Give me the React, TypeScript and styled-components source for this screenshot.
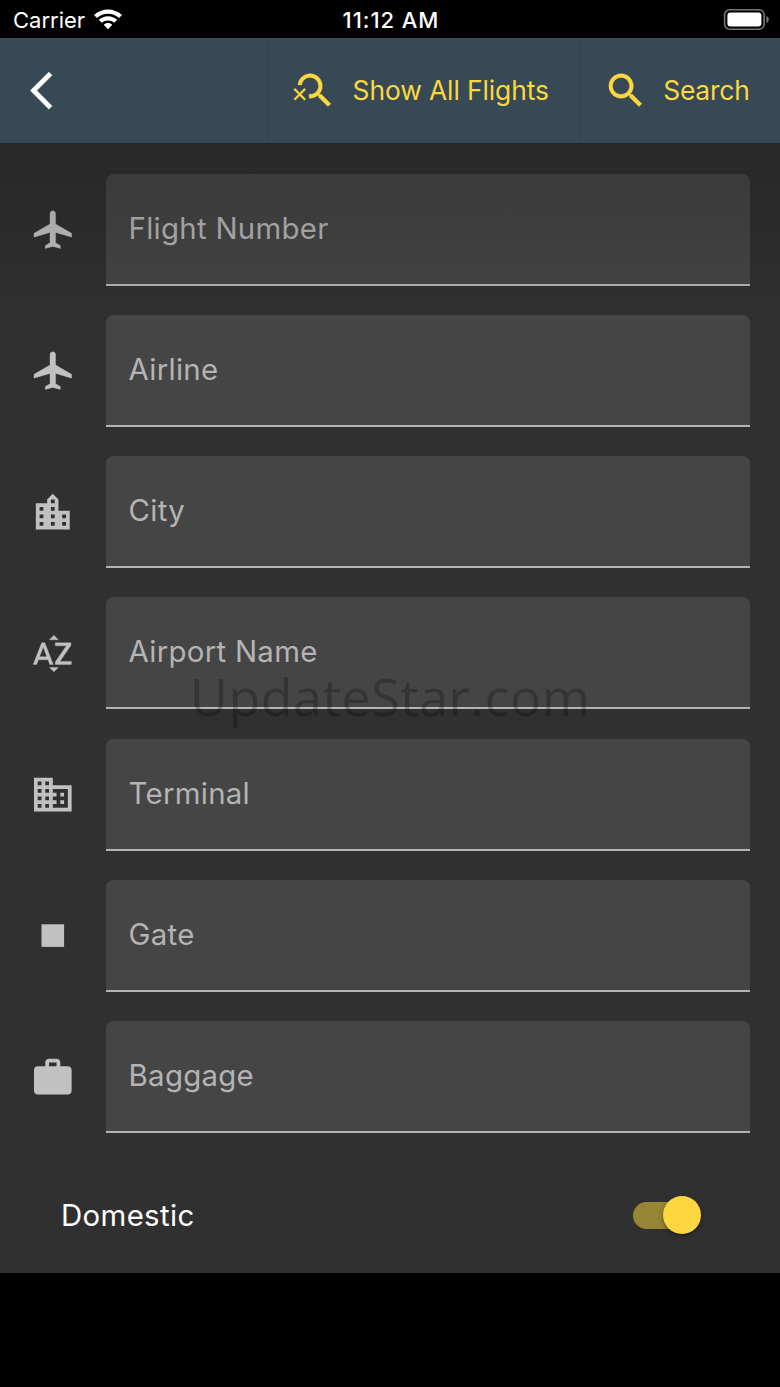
import React from "react";
import styled, { createGlobalStyle } from "styled-components";

const Global = createGlobalStyle`
  * { box-sizing: border-box; }
  body { margin: 0; background: #000; }
`;

const Screen = styled.div`
  position: relative;
  width: 780px;
  height: 1387px;
  overflow: hidden;
  display: flex;
  flex-direction: column;
  background: #000;
  color: #fff;
  font-family: Inter, "Liberation Sans", sans-serif;
`;

const StatusBar = styled.header`
  height: 38px;
  flex: none;
  display: grid;
  grid-template-columns: 1fr auto 1fr;
  align-items: center;
  padding: 1px 11px 0 13px;
  font-size: 22px;
  line-height: 36px;
`;

const Carrier = styled.div`
  display: flex;
  align-items: center;
  gap: 8px;
`;

const Clock = styled.div`
  font-weight: 500;
  font-size: 22px;
  letter-spacing: 0.95px;
`;

const BatterySlot = styled.div`
  display: flex;
  justify-content: flex-end;
`;

const AppBar = styled.nav`
  height: 105px;
  flex: none;
  display: flex;
  background: #364954;
  color: #fdd73f;
  font-size: 26.4px;
`;

const BackButton = styled.div`
  width: 268px;
  display: flex;
  align-items: center;
  padding-left: 30px;
  color: #fff;
`;

const BarAction = styled.div<{ $width: number; $space: number }>`
  width: ${(p) => p.$width}px;
  display: flex;
  align-items: center;
  padding-left: 23px;
  border-left: 1px solid #32444c;
  letter-spacing: ${(p) => p.$space}px;
  white-space: nowrap;
`;

const ActionLabel = styled.span`
  margin-left: 15px;
  padding-bottom: 2px;
`;

const Form = styled.main`
  position: relative;
  height: 1130px;
  flex: none;
  display: flex;
  flex-direction: column;
  gap: 29.3px;
  padding: 30.5px 30px 0;
  background: #303030;
`;

const BarShade = styled.div`
  position: absolute;
  inset: 0 0 auto 0;
  height: 180px;
  background: linear-gradient(rgba(0, 0, 0, 0.16), rgba(0, 0, 0, 0.12) 40%, rgba(0, 0, 0, 0));
`;

const FieldRow = styled.div`
  height: 112px;
  flex: none;
  display: flex;
  align-items: center;
  gap: 30px;
  color: #c1c1c1;
`;

const Field = styled.div`
  flex: 1;
  height: 112px;
  padding: 0 23px;
  border-radius: 7.5px 7.5px 0 0;
  border-bottom: 2px solid #b4b4b4;
  background: #454545;
  color: #b4b4b4;
  font-size: 29.4px;
  line-height: 110.4px;
  letter-spacing: 0.28px;
`;

const SwitchRow = styled.div`
  display: flex;
  align-items: center;
  justify-content: space-between;
  margin-top: 33.8px;
  height: 38px;
  padding: 0 49px 0 31px;
  font-size: 29.4px;
  letter-spacing: 0.35px;
`;

const Track = styled.div`
  width: 68px;
  height: 38px;
  display: flex;
  align-items: center;
  justify-content: flex-end;
  position: relative;
  &::before {
    content: "";
    position: absolute;
    left: 0;
    top: 6px;
    width: 62px;
    height: 26.5px;
    border-radius: 14px;
    background: #978536;
  }
`;

const Thumb = styled.div`
  position: relative;
  width: 38px;
  height: 38px;
  border-radius: 50%;
  background: #fed640;
  box-shadow: 0 2px 4px rgba(0, 0, 0, 0.4);
`;

const Watermark = styled.div`
  position: absolute;
  left: 190px;
  top: 662px;
  font-family: "Open Sans", "Noto Sans", sans-serif;
  font-size: 52px;
  line-height: 68px;
  letter-spacing: 0.5px;
  color: rgba(0, 0, 0, 0.24);
  white-space: nowrap;
`;

const paths = {
  back: "M11.67 3.87L9.9 2.1 0 12l9.9 9.9 1.77-1.77L3.54 12z",
  search:
    "M15.5 14h-.79l-.28-.27C15.41 12.59 16 11.11 16 9.5 16 5.91 13.09 3 9.5 3S3 5.91 3 9.5 5.91 16 9.5 16c1.61 0 3.09-.59 4.23-1.57l.27.28v.79l5 4.99L20.49 19l-4.99-5zm-6 0C7.01 14 5 11.99 5 9.5S7.01 5 9.5 5 14 7.01 14 9.5 11.99 14 9.5 14z",
  searchOff:
    "M15.5 14h-.79l-.28-.27C15.41 12.59 16 11.11 16 9.5 16 5.91 13.09 3 9.5 3 6.08 3 3.28 5.64 3.03 9h2.02C5.3 6.75 7.18 5 9.5 5 11.99 5 14 7.01 14 9.5S11.99 14 9.5 14c-.17 0-.33-.03-.5-.05v2.02c.17.02.33.03.5.03 1.61 0 3.09-.59 4.23-1.57l.27.28v.79l5 4.99L20.49 19l-4.99-5zM6.47 10.82L4 13.29l-2.47-2.47-.71.71L3.29 14 .82 16.47l.71.71L4 14.71l2.47 2.47.71-.71L4.71 14l2.47-2.47z",
  plane:
    "M22 16v-2l-8.5-5V3.5c0-.83-.67-1.5-1.5-1.5s-1.5.67-1.5 1.5V9L2 14v2l8.5-2.5V19L8 20.5V22l4-1 4 1v-1.5L13.5 19v-5.5L22 16z",
  city:
    "M15 11V5l-3-3-3 3v2H3v14h18V11h-6zm-8 8H5v-2h2v2zm0-4H5v-2h2v2zm0-4H5V9h2v2zm6 8h-2v-2h2v2zm0-4h-2v-2h2v2zm0-4h-2V9h2v2zm0-4h-2V5h2v2zm6 12h-2v-2h2v2zm0-4h-2v-2h2v2z",
  alpha:
    "M14.94 4.66h-4.72l2.36-2.36zm-4.69 14.71h4.66l-2.33 2.33zM6.1 6.27L1.6 17.73h1.84l.92-2.45h5.11l.92 2.45h1.84L7.74 6.27H6.1zm-1.13 7.37l1.94-5.18 1.94 5.18H4.97zm10.76 2.5h6.12v1.59h-8.53v-1.29l5.92-8.56h-5.88v-1.6h8.3v1.26l-5.93 8.6z",
  terminal:
    "M12 7V3H2v18h20V7H12zM6 19H4v-2h2v2zm0-4H4v-2h2v2zm0-4H4V9h2v2zm0-4H4V5h2v2zm4 12H8v-2h2v2zm0-4H8v-2h2v2zm0-4H8V9h2v2zm0-4H8V5h2v2zm10 12h-8v-2h2v-2h-2v-2h2v-2h-2V9h8v10zm-2-8h-2v2h2v-2zm0 4h-2v2h2v-2z",
  gate: "M6 6h12v12H6z",
  bag: "M20 6h-4V4c0-1.11-.89-2-2-2h-4c-1.11 0-2 .89-2 2v2H4c-1.11 0-1.99.89-1.99 2L2 19c0 1.11.89 2 2 2h16c1.11 0 2-.89 2-2V8c0-1.11-.89-2-2-2zm-6 0h-4V4h4v2z",
};

const Glyph = styled.svg<{ $weight: number }>`
  width: 45.6px;
  height: 45.2px;
  flex: none;
  fill: currentColor;
  stroke: currentColor;
  stroke-width: ${(p) => p.$weight};
`;

function Icon({ name, weight = 0 }: { name: keyof typeof paths; weight?: number }) {
  return (
    <Glyph viewBox="0 0 24 24" $weight={weight}>
      <path d={paths[name]} />
    </Glyph>
  );
}

const fields: { icon: keyof typeof paths; label: string; weight?: number }[] = [
  { icon: "plane", label: "Flight Number", weight: 0.15 },
  { icon: "plane", label: "Airline", weight: 0.15 },
  { icon: "city", label: "City" },
  { icon: "alpha", label: "Airport Name", weight: 0.2 },
  { icon: "terminal", label: "Terminal" },
  { icon: "gate", label: "Gate" },
  { icon: "bag", label: "Baggage" },
];

export default function App() {
  return (
    <Screen>
      <Global />
      <StatusBar>
        <Carrier>
          Carrier
          <svg width="30" height="22" viewBox="0 0 30 22" fill="#fff">
            <path d="M1 6C8.900-1.400 21.100-1.400 29 6L26 9C19.800 3.200 10.200 3.200 4 9Z" />
            <path d="M5.800 10.800C11 6 19 6 24.200 10.800L21.200 13.800C17.700 10.600 12.300 10.600 8.800 13.800Z" />
            <path d="M15 20.300L10.700 15.700C13.100 13.500 16.900 13.500 19.300 15.700Z" />
          </svg>
        </Carrier>
        <Clock>11:12 AM</Clock>
        <BatterySlot>
          <svg width="46" height="21" viewBox="0 0 46 21">
            <rect x="1.6" y="0.8" width="39.6" height="19.4" rx="5" fill="none" stroke="#777" strokeWidth="1.6" />
            <rect x="4.4" y="3.4" width="34" height="14.2" rx="3" fill="#fff" />
            <path d="M43.4 7c3.2 1.3 3.2 5.700 0 7z" fill="#777" />
          </svg>
        </BatterySlot>
      </StatusBar>
      <AppBar>
        <BackButton>
          <Icon name="back" weight={0.15} />
        </BackButton>
        <BarAction $width={310.6} $space={-0.1}>
          <Icon name="searchOff" weight={0.2} />
          <ActionLabel>Show All Flights</ActionLabel>
        </BarAction>
        <BarAction $width={201.4} $space={-0.2}>
          <Icon name="search" weight={0.2} />
          <ActionLabel>Search</ActionLabel>
        </BarAction>
      </AppBar>
      <Form>
        {fields.map((f) => (
          <FieldRow key={f.label}>
            <Icon name={f.icon} weight={f.weight} />
            <Field>{f.label}</Field>
          </FieldRow>
        ))}
        <SwitchRow>
          <span>Domestic</span>
          <Track>
            <Thumb />
          </Track>
        </SwitchRow>
        <BarShade />
      </Form>
      <Watermark>UpdateStar.com</Watermark>
    </Screen>
  );
}
